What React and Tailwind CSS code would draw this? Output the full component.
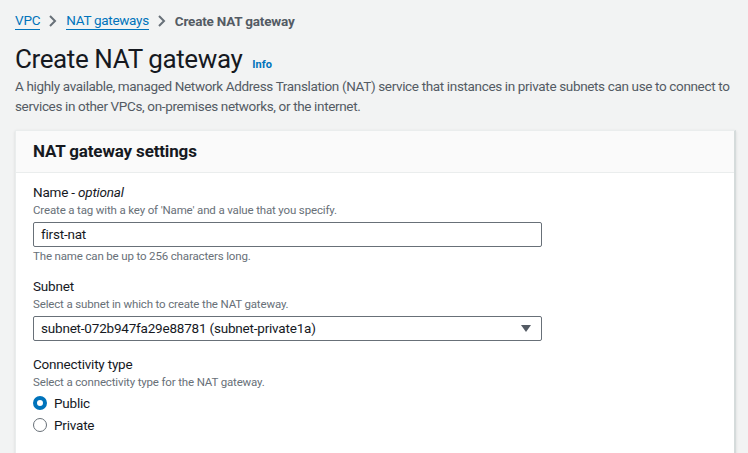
import React from "react";

const font = { fontFamily: 'Roboto, "Liberation Sans", Arial, sans-serif' };

function Chevron() {
  return (
    <svg width="10" height="14" viewBox="0 0 10 14" className="mx-[8px]">
      <path d="M2 2l5 5-5 5" fill="none" stroke="#687078" strokeWidth="2" />
    </svg>
  );
}

export default function App() {
  return (
    <div className="w-[748px] h-[453px] overflow-hidden bg-[#f2f3f3] text-[#16191f]" style={font}>
      <div className="pl-[15px] pr-[13px]">
        <div className="flex items-center h-[20px] mt-[11px] text-[13.5px] tracking-[-0.2px]">
          <span className="text-[#0073bb] border-b border-[#0073bb] leading-[17px]">VPC</span>
          <Chevron />
          <span className="text-[#0073bb] border-b border-[#0073bb] leading-[17px] tracking-[-0.3px]">NAT gateways</span>
          <Chevron />
          <span className="text-[#545b64] font-bold">Create NAT gateway</span>
        </div>
        <div className="flex items-baseline mt-[12px] h-[32px]">
          <h1 className="text-[26px] tracking-[-0.4px] leading-[32px] font-normal text-[#16191f]">Create NAT gateway</h1>
          <span className="ml-[10px] text-[11px] font-bold text-[#0073bb]">Info</span>
        </div>
        <div className="text-[13.5px] tracking-[-0.35px] leading-[20px] text-[#545b64] mt-[1px] whitespace-nowrap">
          <div>A highly available, managed Network Address Translation (NAT) service that instances in private subnets can use to connect to</div>
          <div>services in other VPCs, on-premises networks, or the internet.</div>
        </div>
        <div className="mt-[14px] w-[721px] bg-white border border-[#eaeded] border-r-[#d5dbdb] border-r-2 shadow-sm h-[400px]">
          <div className="h-[42px] bg-[#fafafa] border-b border-[#eaeded] flex items-center px-[17px]">
            <h2 className="text-[17px] tracking-[-0.15px] font-bold text-[#16191f]">NAT gateway settings</h2>
          </div>
          <div className="px-[17px] pt-[9px] text-[13.5px] tracking-[-0.2px]">
            <div className="leading-[20px]">
              Name - <i>optional</i>
            </div>
            <div className="text-[11.5px] tracking-[-0.15px] leading-[16px] text-[#687078]">
              Create a tag with a key of 'Name' and a value that you specify.
            </div>
            <div className="mt-[4px] w-[509px] h-[25px] border border-[#687078] rounded-[2px] flex items-center px-[7px]">
              first-nat
            </div>
            <div className="text-[11.5px] tracking-[-0.15px] leading-[16px] text-[#687078] mt-[1px]">
              The name can be up to 256 characters long.
            </div>

            <div className="leading-[20px] mt-[12px]">Subnet</div>
            <div className="text-[11.5px] tracking-[-0.15px] leading-[16px] text-[#687078]">
              Select a subnet in which to create the NAT gateway.
            </div>
            <div className="mt-[4px] w-[509px] h-[25px] border border-[#687078] rounded-[2px] flex items-center justify-between pl-[7px] pr-[10px]">
              <span>subnet-072b947fa29e88781 (subnet-private1a)</span>
              <svg width="10" height="8" viewBox="0 0 10 8">
                <path d="M0 0h10L5 7z" fill="#545b64" />
              </svg>
            </div>

            <div className="leading-[20px] mt-[13px]">Connectivity type</div>
            <div className="text-[11.5px] tracking-[-0.15px] leading-[16px] text-[#687078]">
              Select a connectivity type for the NAT gateway.
            </div>
            <div className="flex items-center h-[22px] mt-[2px]">
              <span className="w-[14px] h-[14px] rounded-full border-[4px] border-[#0073bb] bg-white mr-[7px]" />
              Public
            </div>
            <div className="flex items-center h-[22px]">
              <span className="w-[14px] h-[14px] rounded-full border border-[#687078] bg-white mr-[7px]" />
              Private
            </div>
          </div>
        </div>
      </div>
    </div>
  );
}
